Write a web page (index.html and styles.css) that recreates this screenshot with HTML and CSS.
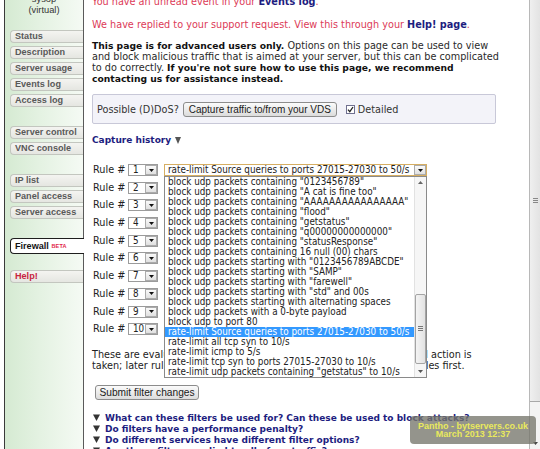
FILE: index.html
```html
<!DOCTYPE html>
<html>
<head>
<meta charset="utf-8">
<title>Firewall</title>
<link rel="stylesheet" href="styles.css">
</head>
<body>
<div class="page">
  <div class="gutter"></div>
  <nav class="side">
    <div class="user"><span>sysop</span><span>(virtual)</span></div>
    <div class="tabs">
      <div class="tab">Status</div>
      <div class="tab">Description</div>
      <div class="tab">Server usage</div>
      <div class="tab">Events log</div>
      <div class="tab">Access log</div>
      <div class="tab gap">Server control</div>
      <div class="tab">VNC console</div>
      <div class="tab gap">IP list</div>
      <div class="tab">Panel access</div>
      <div class="tab">Server access</div>
      <div class="tab gap active">Firewall <span class="beta">BETA</span></div>
      <div class="tab help">Help!</div>
    </div>
  </nav>
  <main class="main">
    <p class="msg m1">You have an unread event in your <b>Events log</b>.</p>
    <p class="msg m2">We have replied to your support request. View this through your <b>Help! page</b>.</p>
    <p class="intro"><b>This page is for advanced users only.</b> Options on this page can be used to view<br>and block malicious traffic that is aimed at your server, but this can be complicated<br>to do correctly. <b>If you're not sure how to use this page, we recommend<br>contacting us for assistance instead.</b></p>
    <div class="ddos">
      <span>Possible (D)DoS?</span>
      <button class="btn cap">Capture traffic to/from your VDS</button>
      <span class="chk"><svg width="7" height="7" viewBox="0 0 7 7"><path d="M1 3.6l1.8 2L6 1" fill="none" stroke="#222" stroke-width="1.3"/></svg></span>
      <span class="det">Detailed</span>
    </div>
    <div class="hist">Capture history <svg width="6" height="7" viewBox="0 0 6 7"><path d="M0 0h6L3 7z" fill="#555"/></svg></div>
    <div class="rules">
      <div class="rule"><span class="rl">Rule #</span><div class="sel small"><span class="v">1</span><span class="a"><svg width="5" height="3" viewBox="0 0 5 3"><path d="M0 0h5L2.5 3z" fill="#111"/></svg></span></div><div class="sel big"><span class="v">rate-limit Source queries to ports 27015-27030 to 50/s</span><span class="a"><svg width="5" height="3" viewBox="0 0 5 3"><path d="M0 0h5L2.5 3z" fill="#111"/></svg></span></div></div>
      <div class="rule"><span class="rl">Rule #</span><div class="sel small"><span class="v">2</span><span class="a"><svg width="5" height="3" viewBox="0 0 5 3"><path d="M0 0h5L2.5 3z" fill="#111"/></svg></span></div></div>
      <div class="rule"><span class="rl">Rule #</span><div class="sel small"><span class="v">3</span><span class="a"><svg width="5" height="3" viewBox="0 0 5 3"><path d="M0 0h5L2.5 3z" fill="#111"/></svg></span></div></div>
      <div class="rule"><span class="rl">Rule #</span><div class="sel small"><span class="v">4</span><span class="a"><svg width="5" height="3" viewBox="0 0 5 3"><path d="M0 0h5L2.5 3z" fill="#111"/></svg></span></div></div>
      <div class="rule"><span class="rl">Rule #</span><div class="sel small"><span class="v">5</span><span class="a"><svg width="5" height="3" viewBox="0 0 5 3"><path d="M0 0h5L2.5 3z" fill="#111"/></svg></span></div></div>
      <div class="rule"><span class="rl">Rule #</span><div class="sel small"><span class="v">6</span><span class="a"><svg width="5" height="3" viewBox="0 0 5 3"><path d="M0 0h5L2.5 3z" fill="#111"/></svg></span></div></div>
      <div class="rule"><span class="rl">Rule #</span><div class="sel small"><span class="v">7</span><span class="a"><svg width="5" height="3" viewBox="0 0 5 3"><path d="M0 0h5L2.5 3z" fill="#111"/></svg></span></div></div>
      <div class="rule"><span class="rl">Rule #</span><div class="sel small"><span class="v">8</span><span class="a"><svg width="5" height="3" viewBox="0 0 5 3"><path d="M0 0h5L2.5 3z" fill="#111"/></svg></span></div></div>
      <div class="rule"><span class="rl">Rule #</span><div class="sel small"><span class="v">9</span><span class="a"><svg width="5" height="3" viewBox="0 0 5 3"><path d="M0 0h5L2.5 3z" fill="#111"/></svg></span></div></div>
      <div class="rule"><span class="rl">Rule #</span><div class="sel small"><span class="v">10</span><span class="a"><svg width="5" height="3" viewBox="0 0 5 3"><path d="M0 0h5L2.5 3z" fill="#111"/></svg></span></div></div>
      <div class="list">
        <div class="items">
          <div>block udp packets containing "0123456789"</div>
          <div>block udp packets containing "A cat is fine too"</div>
          <div>block udp packets containing "AAAAAAAAAAAAAAAA"</div>
          <div>block udp packets containing "flood"</div>
          <div>block udp packets containing "getstatus"</div>
          <div>block udp packets containing "q00000000000000"</div>
          <div>block udp packets containing "statusResponse"</div>
          <div>block udp packets containing 16 null (00) chars</div>
          <div>block udp packets starting with "0123456789ABCDE"</div>
          <div>block udp packets starting with "SAMP"</div>
          <div>block udp packets starting with "farewell"</div>
          <div>block udp packets starting with "std" and 00s</div>
          <div>block udp packets starting with alternating spaces</div>
          <div>block udp packets with a 0-byte payload</div>
          <div>block udp to port 80</div>
          <div class="on">rate-limit Source queries to ports 27015-27030 to 50/s</div>
          <div>rate-limit all tcp syn to 10/s</div>
          <div>rate-limit icmp to 5/s</div>
          <div>rate-limit tcp syn to ports 27015-27030 to 10/s</div>
          <div>rate-limit udp packets containing "getstatus" to 10/s</div>
        </div>
        <div class="lsb">
          <span class="lup"><svg width="5" height="3" viewBox="0 0 5 3"><path d="M0 3h5L2.5 0z" fill="#666"/></svg></span>
          <span class="lthumb"><svg width="5" height="5" viewBox="0 0 5 5"><path d="M0 .5h5M0 2.5h5M0 4.5h5" stroke="#777" stroke-width="1"/></svg></span>
          <span class="ldown"><svg width="5" height="3" viewBox="0 0 5 3"><path d="M0 0h5L2.5 3z" fill="#555"/></svg></span>
        </div>
      </div>
    </div>
    <p class="note">These are evaluated in order, the first matching rule has its specified action is<br>taken; later rules are ignored, so you should put the more specific rules first.</p>
    <button class="btn submit">Submit filter changes</button>
    <ul class="faq">
      <li><svg width="7" height="7" viewBox="0 0 7 7"><path d="M0 0.5h7L3.5 7z" fill="#333"/></svg>What can these filters be used for? Can these be used to block attacks?</li>
      <li><svg width="7" height="7" viewBox="0 0 7 7"><path d="M0 0.5h7L3.5 7z" fill="#333"/></svg>Do filters have a performance penalty?</li>
      <li><svg width="7" height="7" viewBox="0 0 7 7"><path d="M0 0.5h7L3.5 7z" fill="#333"/></svg>Do different services have different filter options?</li>
      <li><svg width="7" height="7" viewBox="0 0 7 7"><path d="M0 0.5h7L3.5 7z" fill="#333"/></svg>Are these filters applied to all of my traffic?</li>
    </ul>
  </main>
  <div class="vscroll">
    <div class="vthumb"><svg width="5" height="5" viewBox="0 0 5 5"><path d="M0 .5h5M0 2.5h5M0 4.5h5" stroke="#888" stroke-width="1"/></svg></div>
    <div class="vtrack"></div>
    <div class="vdown"><svg width="5" height="3" viewBox="0 0 5 3"><path d="M0 0h5L2.5 3z" fill="#444"/></svg></div>
  </div>
</div>
<div class="mark">Pantho - bytservers.co.uk<br>March 2013 12:37</div>
<svg class="cursor" width="11" height="17" viewBox="0 0 11 17"><path d="M0.5 0.5V13.5L3.6 10.6L5.9 15.8L7.9 14.9L5.6 9.8H9.9Z" fill="#fff" stroke="#111" stroke-width="1"/></svg>
</body>
</html>
```
FILE: styles.css
```css
* { box-sizing: border-box; margin: 0; padding: 0; }
html, body { width: 540px; height: 449px; overflow: hidden; }
body {
  background: #fff;
  font-family: "DejaVu Sans", Verdana, sans-serif;
  font-size: 9.7px;
  color: #222;
  position: relative;
}
.page { display: flex; height: 449px; }
.gutter { width: 4px; flex: none; background: #fff; }

/* sidebar */
.side {
  width: 80px;
  flex: none;
  border-left: 1px solid #3a3a3a;
  border-right: 1px solid #5a5a5a;
  background: linear-gradient(to right, #d5ead2 0%, #e4f2e2 45%, #f5faf4 100%);
  font-family: "Liberation Sans", Arial, sans-serif;
}
.user {
  margin-top: -6px;
  display: flex;
  flex-direction: column;
  align-items: center;
  font-size: 9.3px;
  line-height: 11px;
  color: #333;
}
.tabs { margin-top: 14px; padding-left: 5px; display: flex; flex-direction: column; }
.tab {
  height: 13px;
  margin-bottom: 3px;
  padding-left: 4px;
  border: 1px solid #c3c6bf;
  border-right: 0;
  border-radius: 4px 0 0 4px;
  background: linear-gradient(#f4f4f1, #e5e6e1);
  font-size: 9.1px;
  font-weight: bold;
  line-height: 11px;
  color: #595959;
  white-space: nowrap;
}
.tab.gap { margin-top: 16px; }
.tab.active {
  height: 16px;
  margin-right: -1px;
  background: #fff;
  border-color: #1e1e1e;
  color: #111;
  line-height: 14px;
}
.tab.help { margin-top: 13px; color: #c8243f; }
.beta { font-size: 5.5px; color: #e11f48; vertical-align: 1px; letter-spacing: 0.2px; }

/* main */
.main { flex: 1; min-width: 0; padding-left: 8px; white-space: nowrap; }
.msg { line-height: 11px; color: #dc3a57; }
.msg b { color: #1d1d80; }
.m1 { margin-top: -4px; }
.m2 { margin-top: 11.5px; }
.intro { margin-top: 10px; line-height: 11px; color: #2a2a2a; }
.intro b { color: #111; font-size: 9.2px; }

.ddos {
  margin-top: 10.5px;
  width: 404px;
  height: 30px;
  border: 1px solid #c8c8d8;
  border-radius: 2px;
  background: #f3f3f9;
  display: flex;
  align-items: center;
  padding-left: 4px;
  color: #333;
}
.btn {
  display: block;
  font-family: "Liberation Sans", Arial, sans-serif;
  font-size: 10px;
  height: 15px;
  line-height: 13px;
  border: 1px solid #8c8c8c;
  border-radius: 3px;
  background: linear-gradient(#fbfbfb, #dcdcdc);
  color: #1a1a1a;
  text-align: center;
}
.cap { width: 154px; margin-left: 4px; }
.chk {
  width: 9px;
  height: 9px;
  margin-left: 9px;
  border: 1px solid #707090;
  background: #fff;
  display: flex;
  align-items: center;
  justify-content: center;
}
.det { margin-left: 3px; }

.hist {
  margin-top: 10.5px;
  height: 11px;
  font-weight: bold;
  font-size: 9px;
  color: #1d1d80;
  display: flex;
  align-items: center;
  gap: 4px;
}

/* rules */
.rules { margin-top: 18.5px; position: relative; display: flex; flex-direction: column; gap: 5.7px; }
.rule { display: flex; align-items: center; height: 12px; }
.rl { width: 36px; line-height: 12px; padding-left: 1px; color: #222; }
.sel {
  height: 12px;
  border: 1px solid #9b9b9b;
  background: #fff;
  display: flex;
  font-family: "DejaVu Sans Condensed", "DejaVu Sans", sans-serif;
  font-size: 9.8px;
  line-height: 10px;
  color: #222;
}
.sel.small { width: 30px; }
.sel .v { flex: 1; padding-left: 4px; overflow: hidden; }
.sel .a {
  width: 12px;
  border: 1px solid #ababab;
  background: linear-gradient(#fafafa, #e0e0e0);
  display: flex;
  align-items: center;
  justify-content: center;
}
.sel.big { width: 263px; margin-left: 6px; border-color: #d6ae62; }
.sel.big .v { padding-left: 3px; }

.list {
  position: absolute;
  left: 72px;
  top: 11.5px;
  width: 263px;
  height: 202px;
  border: 1px solid #8a8a8a;
  background: #fff;
  display: flex;
  z-index: 2;
  font-family: "DejaVu Sans Condensed", "DejaVu Sans", sans-serif;
  font-size: 9.8px;
}
.items { flex: 1; display: flex; flex-direction: column; }
.items div { height: 10px; line-height: 10px; padding-left: 3px; color: #222; }
.items .on { background: #3399ff; color: #fff; }
.lsb {
  width: 12px;
  display: flex;
  flex-direction: column;
  border-left: 1px solid #e2e2e2;
  background: #f6f6f6;
}
.lup, .ldown { height: 12px; display: flex; align-items: center; justify-content: center; }
.lthumb {
  height: 70px;
  margin: 105px 0 2px;
  border: 1px solid #a4a4a4;
  border-radius: 2px;
  background: linear-gradient(to right, #f4f4f4, #e2e2e2);
  display: flex;
  align-items: center;
  justify-content: center;
}
.ldown { height: 11px; }

.note { margin-top: 13.5px; line-height: 11px; color: #222; }
.submit { width: 104px; margin-top: 14px; margin-left: 3px; font-size: 10.2px; }

.faq { list-style: none; margin-top: 12.5px; }
.faq li {
  display: flex;
  align-items: center;
  gap: 5px;
  height: 11px;
  padding-left: 1px;
  font-weight: bold;
  font-size: 9px;
  color: #1d1d80;
}

/* page scrollbar */
.vscroll {
  width: 11px;
  flex: none;
  border-left: 1px solid #b8b8b8;
  background: #f3f3f3;
  display: flex;
  flex-direction: column;
}
.vthumb {
  height: 402px;
  background: linear-gradient(to right, #efefef, #e3e3e3);
  border-bottom: 1px solid #a8a8a8;
  display: flex;
  align-items: center;
  justify-content: center;
}
.vtrack { flex: 1; }
.vdown { height: 12px; display: flex; align-items: center; justify-content: center; }

/* overlays */
.mark {
  position: absolute;
  left: 410px;
  top: 416px;
  width: 126px;
  height: 28px;
  padding-top: 5.5px;
  border-radius: 4px;
  background: rgba(118, 118, 108, 0.78);
  color: #e9e95c;
  font-family: "Liberation Sans", Arial, sans-serif;
  font-weight: bold;
  font-size: 9px;
  line-height: 8.5px;
  text-align: center;
}
.cursor { position: absolute; left: 414px; top: 333px; }
```
